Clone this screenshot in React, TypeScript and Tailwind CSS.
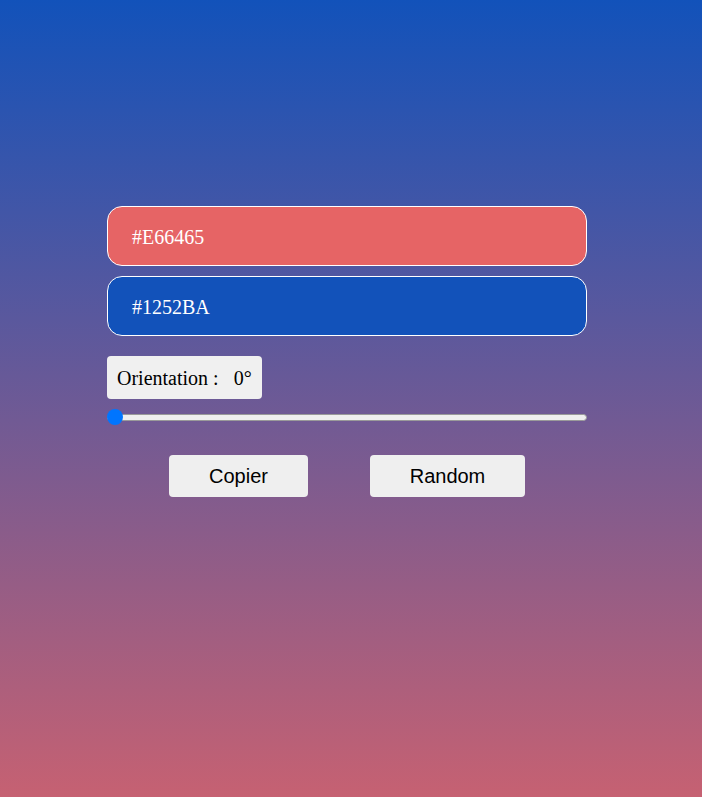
export default function App() {
  return (
    <div className="h-screen w-full bg-[linear-gradient(180deg,#1252BA,#C66172)] pt-[206px]">
      <div className="ml-[107px] flex w-[480px] flex-col">
        <div className="flex h-[60px] items-center rounded-[15px] border border-white bg-[#E66465] pl-[24px] pt-[2px] font-['Liberation_Serif',serif] text-[20px] text-white">
          #E66465
        </div>
        <div className="mt-[10px] flex h-[60px] items-center rounded-[15px] border border-white bg-[#1252BA] pl-[24px] pt-[2px] font-['Liberation_Serif',serif] text-[20px] text-white">
          #1252BA
        </div>
        <div className="mt-[20px] flex h-[43px] w-[155px] items-center rounded-[4px] bg-[#f0f0f0] pl-[10px] font-['Liberation_Serif',serif] text-[20px] text-black whitespace-pre">
          {"Orientation :   0°"}
        </div>
        <div className="relative mt-[10px] h-[16px] w-[480px]">
          <div className="mt-[5px] h-[7px] w-full rounded-[4px] border border-[#9a9a9a] bg-[#efefef]" />
          <div className="absolute left-0 top-0 h-[16px] w-[16px] rounded-full bg-[#0075ff]" />
        </div>
        <div className="mt-[30px] flex justify-center gap-[62px]">
          <button className="h-[42px] w-[139px] rounded-[4px] bg-[#efefef] font-['Liberation_Sans',Arial,sans-serif] text-[20px] text-black">
            Copier
          </button>
          <button className="h-[42px] w-[155px] rounded-[4px] bg-[#efefef] font-['Liberation_Sans',Arial,sans-serif] text-[20px] text-black">
            Random
          </button>
        </div>
      </div>
    </div>
  );
}
